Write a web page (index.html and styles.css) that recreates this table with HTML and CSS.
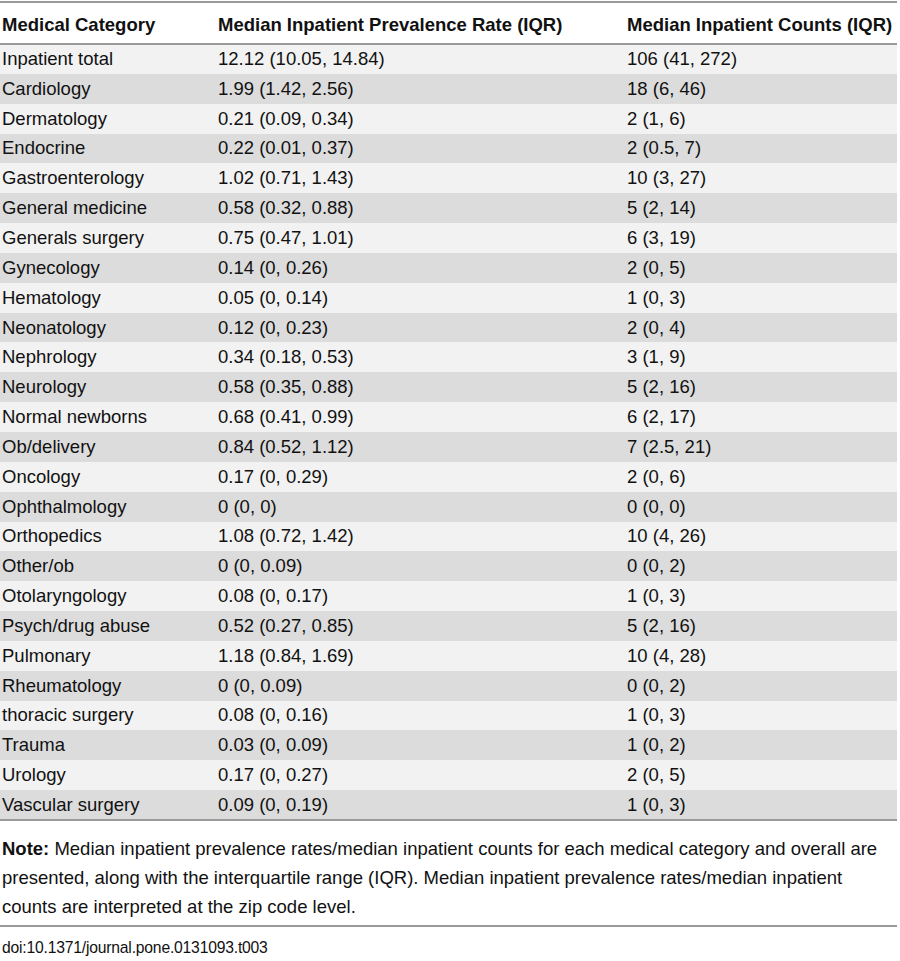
FILE: index.html
```html
<!DOCTYPE html>
<html>
<head>
<meta charset="utf-8">
<link rel="stylesheet" href="styles.css">
</head>
<body>
<div class="page">
<table class="data">
<colgroup><col class="c1"><col class="c2"><col class="c3"></colgroup>
<thead>
<tr><th>Medical Category</th><th>Median Inpatient Prevalence Rate (IQR)</th><th>Median Inpatient Counts (IQR)</th></tr>
</thead>
<tbody>
<tr><td>Inpatient total</td><td>12.12 (10.05, 14.84)</td><td>106 (41, 272)</td></tr>
<tr><td>Cardiology</td><td>1.99 (1.42, 2.56)</td><td>18 (6, 46)</td></tr>
<tr><td>Dermatology</td><td>0.21 (0.09, 0.34)</td><td>2 (1, 6)</td></tr>
<tr><td>Endocrine</td><td>0.22 (0.01, 0.37)</td><td>2 (0.5, 7)</td></tr>
<tr><td>Gastroenterology</td><td>1.02 (0.71, 1.43)</td><td>10 (3, 27)</td></tr>
<tr><td>General medicine</td><td>0.58 (0.32, 0.88)</td><td>5 (2, 14)</td></tr>
<tr><td>Generals surgery</td><td>0.75 (0.47, 1.01)</td><td>6 (3, 19)</td></tr>
<tr><td>Gynecology</td><td>0.14 (0, 0.26)</td><td>2 (0, 5)</td></tr>
<tr><td>Hematology</td><td>0.05 (0, 0.14)</td><td>1 (0, 3)</td></tr>
<tr><td>Neonatology</td><td>0.12 (0, 0.23)</td><td>2 (0, 4)</td></tr>
<tr><td>Nephrology</td><td>0.34 (0.18, 0.53)</td><td>3 (1, 9)</td></tr>
<tr><td>Neurology</td><td>0.58 (0.35, 0.88)</td><td>5 (2, 16)</td></tr>
<tr><td>Normal newborns</td><td>0.68 (0.41, 0.99)</td><td>6 (2, 17)</td></tr>
<tr><td>Ob/delivery</td><td>0.84 (0.52, 1.12)</td><td>7 (2.5, 21)</td></tr>
<tr><td>Oncology</td><td>0.17 (0, 0.29)</td><td>2 (0, 6)</td></tr>
<tr><td>Ophthalmology</td><td>0 (0, 0)</td><td>0 (0, 0)</td></tr>
<tr><td>Orthopedics</td><td>1.08 (0.72, 1.42)</td><td>10 (4, 26)</td></tr>
<tr><td>Other/ob</td><td>0 (0, 0.09)</td><td>0 (0, 2)</td></tr>
<tr><td>Otolaryngology</td><td>0.08 (0, 0.17)</td><td>1 (0, 3)</td></tr>
<tr><td>Psych/drug abuse</td><td>0.52 (0.27, 0.85)</td><td>5 (2, 16)</td></tr>
<tr><td>Pulmonary</td><td>1.18 (0.84, 1.69)</td><td>10 (4, 28)</td></tr>
<tr><td>Rheumatology</td><td>0 (0, 0.09)</td><td>0 (0, 2)</td></tr>
<tr><td>thoracic surgery</td><td>0.08 (0, 0.16)</td><td>1 (0, 3)</td></tr>
<tr><td>Trauma</td><td>0.03 (0, 0.09)</td><td>1 (0, 2)</td></tr>
<tr><td>Urology</td><td>0.17 (0, 0.27)</td><td>2 (0, 5)</td></tr>
<tr><td>Vascular surgery</td><td>0.09 (0, 0.19)</td><td>1 (0, 3)</td></tr>
</tbody>
</table>
<p class="note"><b>Note:</b> Median inpatient prevalence rates/median inpatient counts for each medical category and overall are presented, along with the interquartile range (IQR). Median inpatient prevalence rates/median inpatient counts are interpreted at the zip code level.</p>
<p class="doi">doi:10.1371/journal.pone.0131093.t003</p>
</div>
</body>
</html>
```
FILE: styles.css
```css
html, body {
  margin: 0;
  padding: 0;
  background: #ffffff;
}
.page {
  width: 897px;
  padding-top: 1px;
  font-family: "Liberation Sans", Arial, Helvetica, sans-serif;
  color: #111;
}
.data {
  width: 897px;
  border-collapse: collapse;
  table-layout: fixed;
  font-size: 18.5px;
}
.c1 { width: 216px; }
.c2 { width: 409px; }
.c3 { width: 272px; }
.data thead th {
  text-align: left;
  font-weight: bold;
  height: 42px;
  padding: 3px 0 0 2px;
  border-top: 2px solid #9a9a9a;
  border-bottom: 2px solid #9a9a9a;
  vertical-align: middle;
  white-space: nowrap;
  box-sizing: border-box;
}
.data tbody td {
  height: 29.85px;
  padding: 0 0 0 2px;
  vertical-align: middle;
  white-space: nowrap;
  box-sizing: border-box;
}
.data tbody tr:nth-child(odd) { background: #f2f2f2; }
.data tbody tr:nth-child(even) { background: #dcdcdc; }
.data tbody tr:last-child td { border-bottom: 2px solid #9a9a9a; }
.note {
  margin: 13px 0 0 0;
  padding: 0 0 4px 2px;
  font-size: 18.5px;
  line-height: 29px;
  border-bottom: 2px solid #9a9a9a;
}
.doi {
  margin: 12px 0 0 2px;
  font-size: 15.7px;
  letter-spacing: -0.2px;
}
```
